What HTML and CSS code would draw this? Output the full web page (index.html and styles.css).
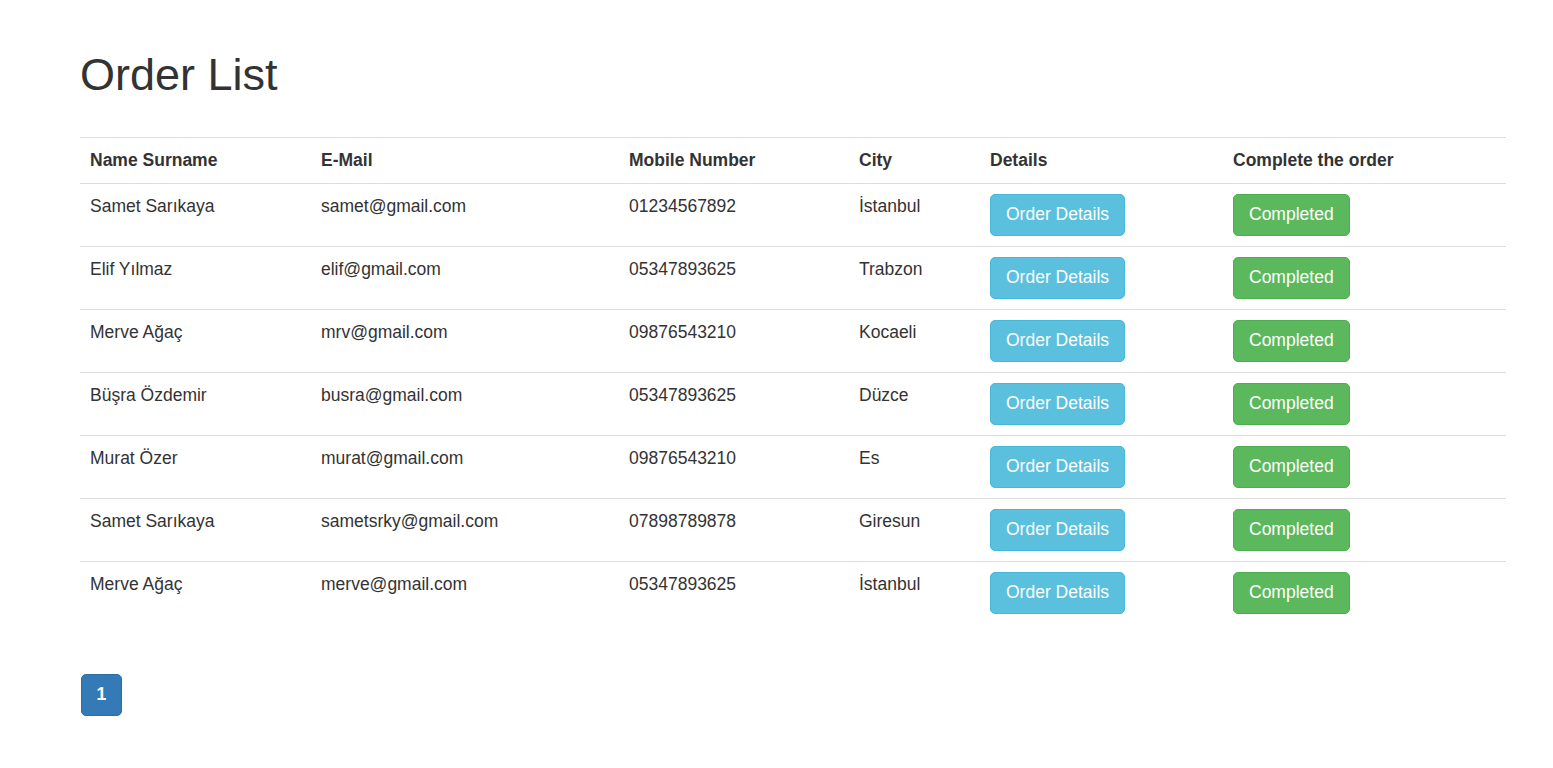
FILE: index.html
```html
<!DOCTYPE html>
<html lang="tr">
<head>
<meta charset="utf-8">
<title>Order List</title>
<link rel="stylesheet" href="styles.css">
</head>
<body>
<div class="wrap">
  <h1 class="title">Order List</h1>
  <table class="table">
    <thead>
      <tr>
        <th class="c1">Name Surname</th>
        <th class="c2">E-Mail</th>
        <th class="c3">Mobile Number</th>
        <th class="c4">City</th>
        <th class="c5">Details</th>
        <th class="c6">Complete the order</th>
      </tr>
    </thead>
    <tbody>
      <tr><td>Samet Sarıkaya</td><td>samet@gmail.com</td><td>01234567892</td><td>İstanbul</td><td><button class="btn btn-info">Order Details</button></td><td><button class="btn btn-success">Completed</button></td></tr>
      <tr><td>Elif Yılmaz</td><td>elif@gmail.com</td><td>05347893625</td><td>Trabzon</td><td><button class="btn btn-info">Order Details</button></td><td><button class="btn btn-success">Completed</button></td></tr>
      <tr><td>Merve Ağaç</td><td>mrv@gmail.com</td><td>09876543210</td><td>Kocaeli</td><td><button class="btn btn-info">Order Details</button></td><td><button class="btn btn-success">Completed</button></td></tr>
      <tr><td>Büşra Özdemir</td><td>busra@gmail.com</td><td>05347893625</td><td>Düzce</td><td><button class="btn btn-info">Order Details</button></td><td><button class="btn btn-success">Completed</button></td></tr>
      <tr><td>Murat Özer</td><td>murat@gmail.com</td><td>09876543210</td><td>Es</td><td><button class="btn btn-info">Order Details</button></td><td><button class="btn btn-success">Completed</button></td></tr>
      <tr><td>Samet Sarıkaya</td><td>sametsrky@gmail.com</td><td>07898789878</td><td>Giresun</td><td><button class="btn btn-info">Order Details</button></td><td><button class="btn btn-success">Completed</button></td></tr>
      <tr><td>Merve Ağaç</td><td>merve@gmail.com</td><td>05347893625</td><td>İstanbul</td><td><button class="btn btn-info">Order Details</button></td><td><button class="btn btn-success">Completed</button></td></tr>
    </tbody>
  </table>
  <ul class="pagination">
    <li><a class="page active" href="#">1</a></li>
  </ul>
</div>
</body>
</html>
```
FILE: styles.css
```css
html, body {
  margin: 0;
  padding: 0;
  background: #fff;
}
body {
  font-family: "Liberation Sans", Arial, Helvetica, sans-serif;
  font-size: 17.5px;
  line-height: 25px;
  color: #333;
}
.wrap {
  margin-left: 80px;
  width: 1426px;
}
.title {
  font-size: 45px;
  font-weight: normal;
  line-height: 49.5px;
  margin: 50px 0 37px 0;
  color: #333;
}
.table {
  width: 100%;
  border-collapse: collapse;
  border-spacing: 0;
  margin: 0;
}
.table th {
  text-align: left;
  font-weight: bold;
  padding: 10px;
  border-top: 1px solid #ddd;
  border-bottom: 1px solid #ddd;
  vertical-align: bottom;
}
.table td {
  padding: 10px;
  vertical-align: top;
  border-top: 1px solid #ddd;
}
.table tbody tr:first-child td {
  border-top: 0;
}
.c1 { width: 211px; }
.c2 { width: 288px; }
.c3 { width: 210px; }
.c4 { width: 111px; }
.c5 { width: 223px; }
.btn {
  display: inline-block;
  font-family: inherit;
  font-size: 17.5px;
  line-height: 25px;
  padding: 7.5px 15px;
  border: 1px solid transparent;
  border-radius: 5px;
  color: #fff;
  margin: 0;
  cursor: pointer;
  vertical-align: top;
}
.btn-info {
  background: #5bc0de;
  border-color: #46b8da;
}
.btn-success {
  background: #5cb85c;
  border-color: #4cae4c;
}
.pagination {
  list-style: none;
  padding: 0;
  margin: 50px 0 0 1px;
  display: flex;
}
.page {
  display: block;
  padding: 7.5px 14.5px;
  line-height: 25px;
  font-weight: bold;
  border: 1px solid #2e6da4;
  background: #337ab7;
  color: #fff;
  text-decoration: none;
  border-radius: 5px;
}
```
